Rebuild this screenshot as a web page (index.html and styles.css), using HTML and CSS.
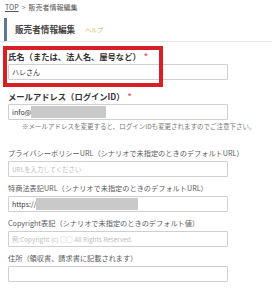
FILE: index.html
```html
<!DOCTYPE html>
<html lang="ja">
  <head>
    <meta charset="UTF-8">
    <meta name="viewport" content="width=device-width, initial-scale=1.0">
    <title>販売者情報編集</title>
    <link rel="stylesheet" href="styles.css">
  </head>
  <body>

    <!-- Breadcrumb -->
    <div class="crumb">
      <a href="#">TOP</a><span class="sep">&gt;</span><span>販売者情報編集</span>
    </div>

    <!-- Page Header -->
    <div class="page-head">
      <h2>販売者情報編集</h2>
      <a href="#" class="help">ヘルプ</a>
    </div>

    <!-- Seller Form -->
    <form class="seller-form">
      <div class="field field-req first">
        <label for="name">氏名（または、法人名、屋号など）<span class="req">*</span></label>
        <input type="text" id="name" value="ハレさん">
        <div class="mark"></div>
      </div>

      <div class="field field-req">
        <label for="email">メールアドレス（ログインID）<span class="req">*</span></label>
        <div class="masked">
          <span>info@</span><span class="blur blur-mail"></span>
        </div>
        <p class="note">※メールアドレスを変更すると、ログインIDも変更されますのでご注意下さい。</p>
      </div>

      <div class="field">
        <label for="privacy">プライバシーポリシーURL（シナリオで未指定のときのデフォルトURL）</label>
        <input type="text" id="privacy" placeholder="URLを入力してください">
      </div>

      <div class="field">
        <label for="law">特商法表記URL（シナリオで未指定のときのデフォルトURL）</label>
        <div class="masked">
          <span>https://</span><span class="blur blur-url"></span>
        </div>
      </div>

      <div class="field">
        <label for="copyright">Copyright表記（シナリオで未指定のときのデフォルト値）</label>
        <input type="text" id="copyright" placeholder="例:Copyright (c) ○○ All Rights Reserved.">
      </div>

      <div class="field">
        <label for="address">住所（領収書、請求書に記載されます）</label>
        <input type="text" id="address">
      </div>
    </form>

  </body>
</html>
```

FILE: styles.css
```css
body {
  font-family: "Noto Sans CJK JP", "Noto Sans", sans-serif;
  margin: 0;
  padding: 0;
  background-color: #fff;
  color: #333;
}
.crumb {
  height: 14px;
  line-height: 14px;
  padding-left: 5px;
  font-size: 7px;
  color: #555;
}
.crumb a {
  color: #555;
}
.crumb .sep {
  margin: 0 3px;
  color: #888;
}
.page-head {
  margin-top: 4px;
  height: 23px;
  display: flex;
  align-items: center;
  border-bottom: 1px solid #e6e6e6;
}
.page-head h2 {
  margin: 0 0 0 4px;
  height: 23px;
  line-height: 23px;
  padding-left: 8px;
  border-left: 3px solid #5f7891;
  font-size: 8.6px;
  font-weight: bold;
  color: #444;
}
.help {
  margin-left: 10px;
  font-size: 6px;
  color: #d8b347;
  text-decoration: none;
}
.seller-form {
  padding: 8px 0 0 8px;
  display: flex;
  flex-direction: column;
}
.field {
  position: relative;
  display: flex;
  flex-direction: column;
  margin-bottom: 5px;
}
.field label {
  line-height: 12px;
  height: 12px;
  margin-bottom: 2px;
  font-size: 7.2px;
  color: #5a5a5a;
  white-space: nowrap;
}
.field-req label {
  font-size: 8.3px;
  font-weight: bold;
  color: #333;
}
.field.first {
  margin-bottom: 10px;
}
.req {
  color: #e06a6a;
  margin-left: 3px;
}
input,
.masked {
  box-sizing: border-box;
  width: 220px;
  height: 16px;
  padding: 0 3px;
  border: 1px solid #cfcfcf;
  border-radius: 1px;
  font-family: inherit;
  font-size: 7px;
  color: #333;
  background: #fff;
}
input::placeholder {
  color: #bdbdbd;
  font-size: 6.4px;
}
.masked {
  display: flex;
  align-items: stretch;
  padding: 1px 0 1px 3px;
  line-height: 13px;
}
.blur {
  background-color: #c9c9c9;
}
.blur-mail {
  width: 75px;
}
.blur-url {
  width: 102px;
}
.note {
  margin: 0;
  padding-left: 14px;
  height: 12px;
  line-height: 12px;
  font-size: 6.5px;
  color: #777;
  white-space: nowrap;
}
.field-req .note {
  margin-bottom: 10px;
}
/* annotation box drawn over the first field */
.mark {
  position: absolute;
  left: -5px;
  top: -4px;
  width: 152px;
  height: 33px;
  border: 4px solid #d71f26;
}
```
